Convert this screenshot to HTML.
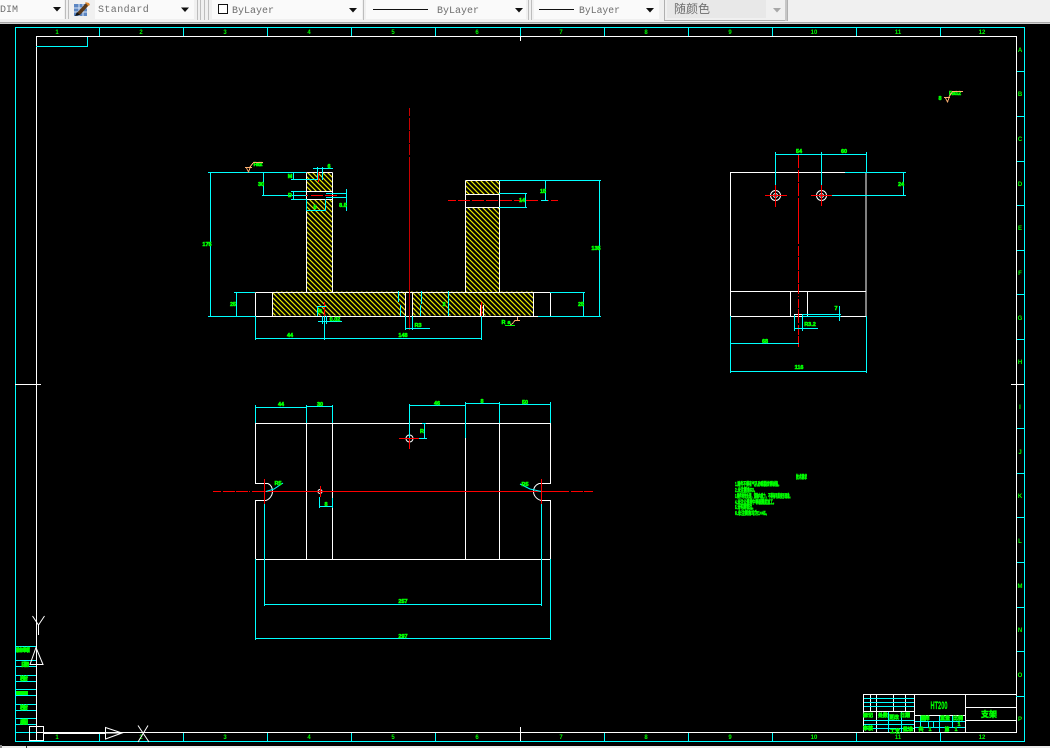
<!DOCTYPE html>
<html>
<head>
<meta charset="utf-8">
<style>
html,body{margin:0;padding:0;width:1050px;height:748px;overflow:hidden;background:#000}
svg{position:absolute;left:0;top:0;display:block}
.tb{font-family:"Liberation Mono","Noto Sans CJK SC",monospace;font-size:10px;fill:#6e6e6e}
.g{font-family:"Liberation Sans","Noto Sans CJK SC",sans-serif;font-size:5.5px;font-weight:bold;fill:#0f0;text-anchor:middle;stroke:#0f0;stroke-width:.55}
.n{font-family:"Liberation Sans",sans-serif;font-size:6px;font-weight:bold;fill:#0f0;text-anchor:middle}
.c{fill:none;stroke:#0ff;stroke-width:1;shape-rendering:crispEdges}
.w{fill:none;stroke:#fff;stroke-width:1;shape-rendering:crispEdges}
.r{fill:none;stroke:#f00;stroke-width:1;shape-rendering:crispEdges}
.o{fill:none;stroke:#ffb070;stroke-width:1;shape-rendering:crispEdges}
.a{fill:none;stroke:#fff;stroke-width:1}
</style>
</head>
<body>
<svg width="1050" height="748" viewBox="0 0 1050 748" xmlns="http://www.w3.org/2000/svg">
<defs>
<pattern id="h" width="5" height="5" patternUnits="userSpaceOnUse">
<rect width="5" height="5" fill="#000"/>
<path d="M-1 -1L6 6M-1 4L1 6M4 -1L6 1" stroke="#e8e800" stroke-width="1.15" fill="none"/>
</pattern>
</defs>

<!-- toolbar -->
<rect x="0" y="0" width="1050" height="24" fill="#f0f0f0"/>
<rect x="0" y="22" width="1050" height="1" fill="#a8a8a8"/>
<rect x="0" y="23" width="1050" height="1" fill="#d0d0d0"/>
<rect x="0" y="0" width="64" height="19" fill="#fafafa"/>
<rect x="95" y="0" width="99" height="19" fill="#fafafa"/>
<rect x="212" y="0" width="150" height="19" fill="#fafafa"/>
<rect x="366" y="0" width="160" height="19" fill="#fafafa"/>
<rect x="534" y="0" width="125" height="19" fill="#fafafa"/>
<path d="M65.5 0V19M68.5 0V19M197.5 0V20M200.5 0V20M204.5 0V20M208.5 0V20M363.5 0V20M528.5 0V20M531.5 0V20" stroke="#bdbdbd" fill="none"/>
<path d="M664.5 0V20.5H787.5V0" stroke="#b0b0b0" fill="none"/>
<rect x="667" y="0" width="99" height="18" fill="#e8e8e8"/>
<rect x="785" y="0" width="2" height="21" fill="#c6c6c6"/>
<text class="tb" x="0" y="12" style="font-size:10px">DIM</text>
<text class="tb" x="98" y="12" letter-spacing=".4">Standard</text>
<text class="tb" x="232" y="13" textLength="42" lengthAdjust="spacingAndGlyphs">ByLayer</text>
<text class="tb" x="437" y="13" textLength="42" lengthAdjust="spacingAndGlyphs">ByLayer</text>
<text class="tb" x="579" y="13" textLength="41" lengthAdjust="spacingAndGlyphs">ByLayer</text>
<text class="tb" x="674" y="13" style="font-size:12px;font-family:'Noto Sans CJK SC',sans-serif">随颜色</text>
<path d="M53 7h8l-4 4.500zM181 7.500h8l-4 4.500zM349 8h8l-4 4.500zM515 8h8l-4 4.500zM646 8h8l-4 4.500z" fill="#111"/>
<path d="M773 8h8l-4 4.500z" fill="#a8a8a8"/>
<rect x="218.500" y="4.500" width="9" height="9" fill="#fff" stroke="#111"/>
<rect x="373" y="9" width="55" height="1" fill="#111"/>
<rect x="539" y="9" width="35" height="1" fill="#111"/>
<!-- style icon -->
<rect x="74" y="4" width="13" height="12" fill="#5c86c2"/>
<path d="M74 8h13M74 12h13M79 4v12M83 4v12" stroke="#d8e4f4" fill="none" shape-rendering="crispEdges"/>
<path d="M76 14L86 3l3 2-9 10z" fill="#5b3a1a"/>
<path d="M75 16l2-4 3 3z" fill="#111"/>
<path d="M85 2l4 1 1 2-2 1z" fill="#e08a30"/>

<!-- frame -->
<rect x="15.500" y="27.500" width="1009" height="714" class="c"/>
<rect x="36.500" y="36.500" width="980" height="696" class="w"/>
<path class="c" d="M36 46.500H87.500V37"/>
<!-- ticks -->
<path class="c" d="M99.500 28V36M183.500 28V36M267.500 28V36M351.500 28V36M435.500 28V36M520.500 28V36M604.500 28V36M688.500 28V36M772.500 28V36M856.500 28V36M940.500 28V36"/>
<path class="c" d="M99.500 733V741M183.500 733V741M267.500 733V741M351.500 733V741M435.500 733V741M520.500 733V741M604.500 733V741M688.500 733V741M772.500 733V741M856.500 733V741M940.500 733V741"/>
<path class="c" d="M1017 71.500H1024M1017 116.500H1024M1017 161.500H1024M1017 205.500H1024M1017 250.500H1024M1017 294.500H1024M1017 339.500H1024M1017 428.500H1024M1017 473.500H1024M1017 517.500H1024M1017 562.500H1024M1017 607.500H1024M1017 651.500H1024M1017 696.500H1024"/>
<path class="w" d="M15 384.500H41M1011 384.500H1024M520.500 36V41M520.500 727V741"/>
<g class="n">
<text x="57" y="34">1</text><text x="141" y="34">2</text><text x="225" y="34">3</text><text x="309" y="34">4</text><text x="393" y="34">5</text><text x="477" y="34">6</text><text x="561" y="34">7</text><text x="646" y="34">8</text><text x="730" y="34">9</text><text x="814" y="34">10</text><text x="898" y="34">11</text><text x="982" y="34">12</text>
<text x="57" y="739">1</text><text x="141" y="739">2</text><text x="225" y="739">3</text><text x="309" y="739">4</text><text x="393" y="739">5</text><text x="477" y="739">6</text><text x="561" y="739">7</text><text x="646" y="739">8</text><text x="730" y="739">9</text><text x="814" y="739">10</text><text x="898" y="739">11</text><text x="982" y="739">12</text>
<text x="1020" y="52">A</text><text x="1020" y="96">B</text><text x="1020" y="141">C</text><text x="1020" y="186">D</text><text x="1020" y="230">E</text><text x="1020" y="275">F</text><text x="1020" y="320">G</text><text x="1020" y="364">H</text><text x="1020" y="409">I</text><text x="1020" y="454">J</text><text x="1020" y="498">K</text><text x="1020" y="543">L</text><text x="1020" y="588">M</text><text x="1020" y="632">N</text><text x="1020" y="677">O</text><text x="1020" y="721">P</text>
</g>

<!-- left table -->
<path class="c" d="M15 646.500H36M15 660.500H36M15 666.500H36M15 675.500H36M15 681.500H36M15 689.500H36M15 695.500H36M15 704.500H36M15 710.500H36M15 718.500H36M15 724.500H36M15 732.500H36"/>
<rect x="16" y="648" width="13" height="4" fill="#0f0" opacity=".9"/>
<rect x="16" y="691" width="12" height="4" fill="#0f0"/>
<g class="g">
<text x="23" y="652" textLength="14" lengthAdjust="spacingAndGlyphs">设计审核</text>
<text x="25" y="666.500" textLength="8">日期</text>
<text x="24" y="680.500" textLength="8">校对</text>
<text x="24" y="709.500" textLength="8">校对</text>
<text x="24" y="724" textLength="8">底图</text>
</g>

<!-- UCS icon -->
<path class="a" d="M32.500 616L38.500 625L44.500 616M38.500 625V635"/>
<path class="a" d="M36 647.500L30 664.500H43zM36.500 650V664" />
<rect x="29.500" y="726.500" width="14" height="14" class="w"/>
<path class="w" d="M36.500 726V740"/>
<rect x="44" y="732" width="62" height="2" fill="#fff"/>
<path class="a" d="M105.500 727.500L122 733L105.500 739zM106 733H122"/>
<path class="a" d="M138 725.500L149 742M148 725.500L138 742"/>

<!-- section view: hatch -->
<path fill="url(#h)" d="M306.500 172.500H332.500V191H306.500zM306.500 199H332.500V291.500H465.500V207H499.500V291.500H533.500V315.500H272.500V291.500H306.500zM465.500 180.500H499.500V194H465.500z"/>
<rect x="405" y="292" width="8" height="24" fill="#000"/>
<!-- section outlines -->
<path class="w" d="M255.500 292.500V316.500H550.500V292.500H255.500M272.500 292.500V316.500M533.500 292.500V316.500"/>
<path class="w" d="M306.500 172.500V292M332.500 172.500V292M306.500 172.500H332.500M306.500 191.500H332.500M306.500 199.500H332.500"/>
<path class="w" d="M465.500 180.500V292M499.500 180.500V292M465.500 180.500H499.500M465.500 194.500H499.500M465.500 207.500H499.500"/>
<path class="w" d="M405.500 292V316M412.500 292V316M480.500 305V316M483.500 305V316"/>
<!-- centerline -->
<path d="M409.500 108V116M409.500 118V130M409.500 131V143M409.500 144V155M409.500 157V330" stroke="#c80000" fill="none" shape-rendering="crispEdges"/>
<path class="r" d="M303 195.500H308M311 195.500H323M325 195.500H337M318.500 172V182M448 200.500H456M458 200.500H470M472 200.500H484M486 200.500H498M500 200.500H512M514 200.500H538M541 200.500H549M551 200.500H558M324.500 302V316M481.500 302V316"/>
<!-- section dims -->
<path class="c" d="M210.500 172V316M208 172.500H306M208 316.500H256M263.500 172V196M262 195.500H306M293.500 172V180M291 179.500H318M293.500 191V200M291 191.500H306M291 199.500H306M313 168.500H333M317.500 167V180M322.500 167V180M306.500 199V211M325.500 199V211M306 210.500H326M326 193.500H347M326 197.500H347M346.500 189V211"/>
<path class="c" d="M236.500 292V316M234 292.500H255M255.500 316V340M255 338.500H481M324.500 316V340M317.500 306V316M317 306.500H326M322.500 316V324M326.500 316V324M318 321.500H342M398.500 291V302M400.500 305V316M405.500 316V330M412.500 316V330M405 328.500H430"/>
<path class="c" d="M499 180.500H601M599.500 180V316M538 316.500H601M545.500 180V200M541 200.500H548M499 193.500H527M499 207.500H527M525.500 193V208M550 292.500H585M583.500 292V316M481.500 316V340M448.500 291V316M421.500 291V304M420.500 305V316"/>
<g class="g">
<text x="207" y="246">175</text><text x="261" y="186">30</text><text x="290" y="178">M</text><text x="329" y="168">6</text>
<text x="315" y="209">5</text><text x="343" y="207">8.5</text><text x="290" y="197">D</text>
<text x="233" y="306">25</text><text x="290" y="337">44</text><text x="403" y="337">148</text><text x="335" y="321">0.02</text><text x="320" y="313">R</text>
<text x="418" y="327">R3</text><text x="444" y="306">2</text><text x="522" y="202">14</text><text x="543" y="193">15</text><text x="596" y="250">135</text><text x="581" y="306">25</text>
<text x="506" y="324" textLength="9">Ra</text>
<text x="258" y="166" textLength="9">Ra3.2</text>
</g>
<rect x="505" y="325" width="10" height="1" fill="#0f0"/>
<rect x="253" y="162" width="10" height="1" fill="#ffb070"/>
<path class="o" d="M245 167.500H252M246.500 168L248.500 172L250 168M250 167L253 163"/>
<path class="o" d="M520 320.500H515L512 324M517.500 317V320M510 325L512 324"/>

<!-- right view -->
<rect x="730.500" y="172.500" width="135.500" height="144" class="w"/>
<path class="w" d="M730 291.500H866M790.500 291V316M807.500 291V316M794 314.500H802"/>
<path class="r" d="M798.500 155V168M798.500 170V182M798.500 183V196M798.500 198V244M798.500 246V256M798.500 257V270M798.500 271V283M798.500 284V294M798.500 296V297M798.500 299V308M798.500 309V323M798.500 325V335M798.500 336V347"/>
<circle cx="775.500" cy="195.500" r="5" class="a"/><circle cx="775.500" cy="195.500" r="2" class="a"/>
<circle cx="821.500" cy="195.500" r="5" class="a"/><circle cx="821.500" cy="195.500" r="2" class="a"/>
<path class="r" d="M765 195.500H787M775.500 185V207M811 195.500H832M821.500 185V206"/>
<path class="c" d="M775.500 152V185M821.500 152V185M866.500 152V172M775 154.500H867M845 172.500H906M832 195.500H906M903.500 172V196"/>
<path class="c" d="M794.500 315V331M802.500 315V331M794 328.500H818M802 314.500H841M802 316.500H841M839.500 306V321M730 343.500H799M730.500 316V373M866.500 316V373M730 371.500H867"/>
<g class="g">
<text x="799" y="153">54</text><text x="844" y="153">60</text><text x="901" y="186">24</text><text x="836" y="310">7</text><text x="810" y="326">R3.2</text><text x="765" y="343">68</text><text x="799" y="369">116</text>
<text x="940" y="100">8</text><text x="955" y="95" textLength="12">Ra3.2</text>
</g>
<rect x="952" y="91" width="11" height="1" fill="#ffb070"/>
<path class="o" d="M944 97.500H950M945.500 98L947.500 102L949 98M949 97L952 92"/>

<!-- plan view -->
<path class="w" d="M255.500 423.500H550.500M255.500 559.500H550.500M255.500 423V483.500H268M255.500 500.500H266M255.500 500V559M306.500 423V559M332.500 423V559M465.500 438V559M499.500 423V559M550.500 423V483.500H539M550.500 500.500H541M550.500 500V559"/>
<path class="a" d="M268 483.500C271 485 272.500 488 272.500 491.500C272.500 495 270 499 266 500.500"/>
<path class="a" d="M539 483.500C535.500 485 533.500 488 533.500 491.500C533.500 495 536 499 541 500.500"/>
<circle cx="409.500" cy="438.500" r="3.500" class="a"/>
<circle cx="320" cy="491.500" r="2" class="a"/>
<path class="r" d="M213 491.500H221M223 491.500H235M236 491.500H248M249 491.500H250M252 491.500H569M571 491.500H583M584 491.500H593M264.500 479V504M541.500 479V504M320.500 486V497M409.500 430V449M399 438.500H420"/>
<path class="c" d="M255.500 405V423M306.500 405V423M332.500 405V423M255 407.500H306M306 406.500H332M264.500 504V606M264 604.500H541M541.500 504V606M255.500 559V640M255 638.500H550M550.500 559V640"/>
<path class="c" d="M409.500 404V438M409 405.500H465M465.500 402V438M465 403.500H499M499.500 402V423M499 404.500H550M550.500 402V423M419 438.500H427M424.500 423V438M422 423.500H426M319.500 497V508M319 506.500H333M332.500 498V508"/>
<path d="M266 491.500L274 489L283 483M541 491.500L530 489L520 484" fill="none" stroke="#0ff"/>
<g class="g">
<text x="281" y="406">44</text><text x="320" y="406">30</text><text x="437" y="405">46</text><text x="482" y="403">8</text><text x="525" y="404">50</text>
<text x="422" y="433">R</text><text x="326" y="506">8</text><text x="278" y="485">R5</text><text x="525" y="486">R5</text><text x="403" y="603">257</text><text x="403" y="638">297</text>
</g>

<!-- notes -->
<g class="g" style="text-anchor:start;font-size:5.500px;stroke-width:.55">
<text x="796" y="479" textLength="11" lengthAdjust="spacingAndGlyphs">技术要求</text>
<text x="735" y="486" textLength="46" lengthAdjust="spacingAndGlyphs">1.铸件不得有气孔砂眼裂纹等缺陷。</text>
<text x="735" y="492" textLength="22" lengthAdjust="spacingAndGlyphs">2.未注圆角R3。</text>
<text x="735" y="498" textLength="57" lengthAdjust="spacingAndGlyphs">3.铸件时效处理，消除内应力，不得有明显变形现象。</text>
<text x="735" y="504" textLength="41" lengthAdjust="spacingAndGlyphs">4.未注公差按中等级精度加工。</text>
<text x="735" y="509" textLength="20" lengthAdjust="spacingAndGlyphs">5.去毛刺锐边。</text>
<text x="735" y="515" textLength="34" lengthAdjust="spacingAndGlyphs">6.未注倒角均为1×45。</text>
</g>

<!-- title block -->
<path class="w" d="M863.500 732V694.500H1016M914.500 694V732M965.500 694V732M965 707.500H1016M965 720.500H1016M914 715.500H965M863 711.500H914"/>
<path class="w" d="M870.500 694V711M876.500 694V732M893.500 694V711M905.500 694V711"/>
<path class="c" d="M864 698.500H914M864 702.500H914M864 706.500H914M864 720.500H914M864 724.500H914M864 728.500H914M888.500 712V732M901.500 712V732M915 721.500H965M915 727.500H965M920.500 716V727M928.500 721V727M933.500 721V727M939.500 716V732M952.500 716V727M1016 696.500H1024"/>
<g class="g" style="font-size:5px">
<text x="868" y="717">标记</text><text x="883" y="717">处数</text><text x="894" y="719">更改</text><text x="905" y="717">日期</text>
<text x="868" y="730">审核</text><text x="895" y="733" textLength="10">工艺</text><text x="908" y="731">批准</text>
<text x="925" y="720" textLength="9">图样</text><text x="945" y="720">重量</text><text x="958" y="720">比例</text><text x="959" y="726">1</text>
<text x="921" y="731">共</text><text x="930" y="731">1</text><text x="947" y="731">第</text><text x="956" y="731">1</text>
</g>
<text x="939" y="709" class="g" style="font-size:11px;stroke-width:.2" textLength="17" lengthAdjust="spacingAndGlyphs">HT200</text>
<text x="989" y="717" class="g" style="font-size:8px;stroke-width:.5">支架</text>

<!-- status strip -->
<rect x="0" y="746" width="1050" height="2" fill="#ececec"/>
<rect x="0" y="745" width="2" height="3" fill="#888"/>
<rect x="26" y="746" width="1" height="2" fill="#333"/>
</svg>
</body>
</html>
